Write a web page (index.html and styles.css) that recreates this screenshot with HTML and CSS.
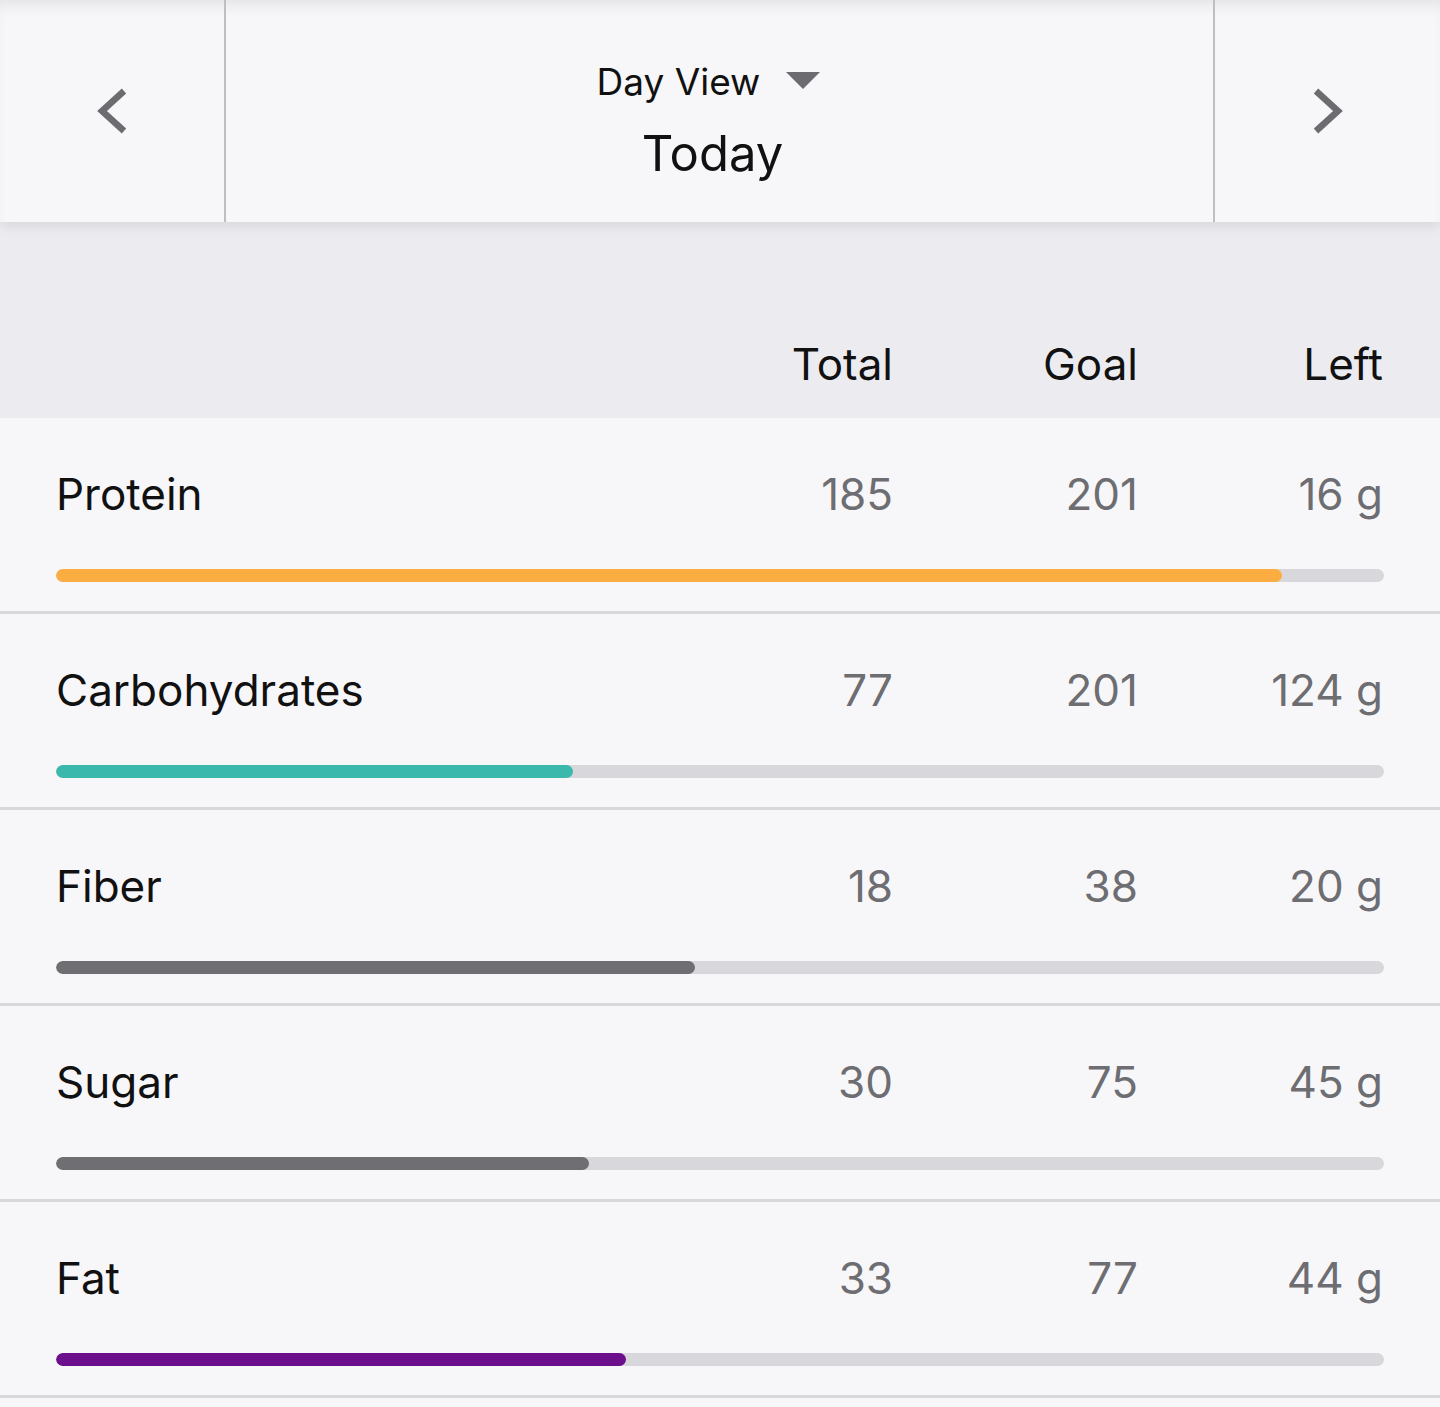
FILE: index.html
```html
<!DOCTYPE html>
<html lang="en">
<head>
    <meta charset="UTF-8">
    <meta name="viewport" content="width=device-width, initial-scale=1.0">
    <title>Nutrients - Day View</title>
    <link rel="stylesheet" href="styles.css">
</head>
<body>
    <header class="day-nav">
        <button class="nav-btn nav-prev" aria-label="Previous day">
            <svg width="40" height="50" viewBox="0 0 40 50">
                <polyline points="32,5 10,25 32,45" fill="none" stroke="#6b6b70" stroke-width="6.5"/>
            </svg>
        </button>
        <div class="nav-center">
            <div class="view-picker">
                <span>Day View</span>
                <svg class="caret" width="34" height="17" viewBox="0 0 34 17">
                    <polygon points="0,0 34,0 17,17" fill="#6b6b70"/>
                </svg>
            </div>
            <div class="nav-date">Today</div>
        </div>
        <button class="nav-btn nav-next" aria-label="Next day">
            <svg width="40" height="50" viewBox="0 0 40 50">
                <polyline points="8,5 30,25 8,45" fill="none" stroke="#6b6b70" stroke-width="6.5"/>
            </svg>
        </button>
    </header>

    <div class="table-head">
        <span></span>
        <span class="col">Total</span>
        <span class="col">Goal</span>
        <span class="col">Left</span>
    </div>

    <div class="nutrient">
        <div class="nutrient-line">
            <span class="name">Protein</span>
            <span class="col num">185</span>
            <span class="col num">201</span>
            <span class="col num">16 g</span>
        </div>
        <div class="track"><div class="fill fill-protein" style="width: 92.3%"></div></div>
    </div>

    <div class="nutrient">
        <div class="nutrient-line">
            <span class="name">Carbohydrates</span>
            <span class="col num">77</span>
            <span class="col num">201</span>
            <span class="col num">124 g</span>
        </div>
        <div class="track"><div class="fill fill-carbs" style="width: 38.9%"></div></div>
    </div>

    <div class="nutrient">
        <div class="nutrient-line">
            <span class="name">Fiber</span>
            <span class="col num">18</span>
            <span class="col num">38</span>
            <span class="col num">20 g</span>
        </div>
        <div class="track"><div class="fill fill-grey" style="width: 48.1%"></div></div>
    </div>

    <div class="nutrient">
        <div class="nutrient-line">
            <span class="name">Sugar</span>
            <span class="col num">30</span>
            <span class="col num">75</span>
            <span class="col num">45 g</span>
        </div>
        <div class="track"><div class="fill fill-grey" style="width: 40.1%"></div></div>
    </div>

    <div class="nutrient">
        <div class="nutrient-line">
            <span class="name">Fat</span>
            <span class="col num">33</span>
            <span class="col num">77</span>
            <span class="col num">44 g</span>
        </div>
        <div class="track"><div class="fill fill-fat" style="width: 42.9%"></div></div>
    </div>
</body>
</html>
```

FILE: styles.css
```css
body {
    margin: 0;
    font-family: Inter, "Noto Sans", sans-serif;
    background-color: #f7f7f9;
    color: #111;
}

.day-nav {
    display: flex;
    height: 222px;
    background-color: #f7f7f9;
    box-shadow: inset 0 12px 16px -8px rgba(0, 0, 0, 0.09), 0 4px 12px rgba(0, 0, 0, 0.09);
    position: relative;
    z-index: 1;
}
.nav-btn {
    flex: none;
    display: flex;
    align-items: center;
    justify-content: center;
    background: none;
    border: none;
    padding: 0;
    cursor: pointer;
}
.nav-prev {
    width: 226px;
    border-right: 2px solid #bfbfc3;
}
.nav-next {
    width: 227px;
    border-left: 2px solid #bfbfc3;
}
.nav-center {
    flex: 1;
    display: flex;
    flex-direction: column;
    align-items: center;
    padding: 60px 14px 0 0;
}
.view-picker {
    display: flex;
    align-items: center;
    gap: 26px;
    font-size: 37px;
    line-height: 44px;
    margin-right: 8px;
}
.caret {
    margin-top: -4px;
}
.nav-date {
    margin-top: 20px;
    font-size: 49px;
    line-height: 60px;
}

.table-head,
.nutrient-line {
    display: grid;
    grid-template-columns: 1fr 245px 245px 245px;
    font-size: 44px;
    line-height: 52px;
}
.table-head {
    background-color: #ececf0;
    height: 196px;
    box-sizing: border-box;
    padding: 0 57px 28px;
    align-items: end;
}
.col {
    text-align: right;
}
.num {
    color: #6d6d72;
}

.nutrient {
    padding: 50px 56px 29px;
    border-bottom: 3px solid #d9d9dd;
}
.nutrient-line {
    padding: 0 1px 0 0;
}
.track {
    margin-top: 49px;
    height: 13px;
    border-radius: 7px;
    background-color: #d8d8dc;
    overflow: hidden;
}
.fill {
    height: 100%;
    border-radius: 7px;
}
.fill-protein {
    background-color: #fbad41;
}
.fill-carbs {
    background-color: #3bb8ac;
}
.fill-grey {
    background-color: #6e6e73;
}
.fill-fat {
    background-color: #6b0f8c;
}
```
